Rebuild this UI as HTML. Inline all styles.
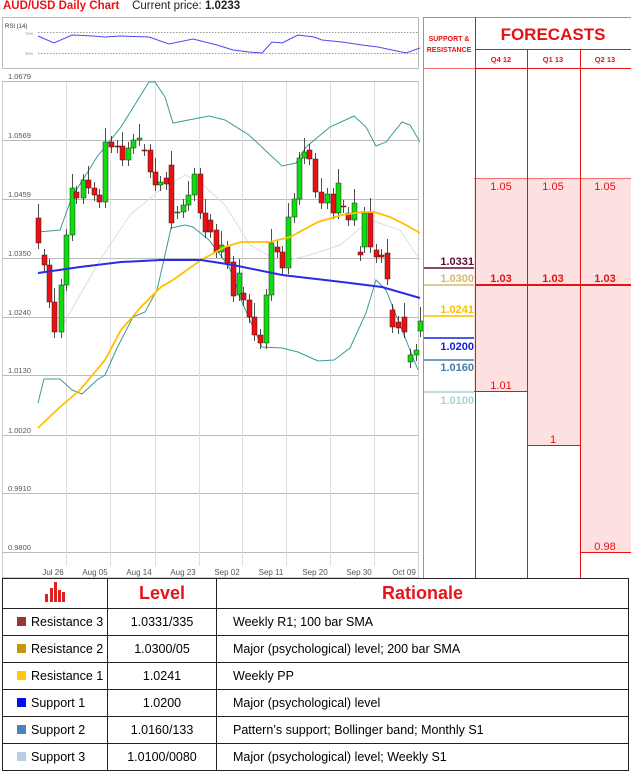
<!DOCTYPE html>
<html><head><meta charset="utf-8"><style>
body{margin:0;width:631px;height:773px;background:#fff;overflow:hidden;position:relative;font-family:"Liberation Sans",sans-serif}
.a{position:absolute}
table{border-collapse:collapse;position:absolute;left:2px;top:578px;width:627px;font-size:12.5px;table-layout:fixed;white-space:nowrap}
td{border:1px solid #222;height:26px;padding:0;overflow:hidden}
.q{display:inline-block;width:9px;height:9px;margin:0 5px 0 14px}
</style></head><body>
<div class="a" style="left:3px;top:0;font-size:11.5px;white-space:nowrap"><b style="color:#e8141a">AUD/USD Daily Chart</b>&nbsp;&nbsp;&nbsp;&nbsp;<span style="color:#222">Current price: <b>1.0233</b></span></div>
<svg class="a" style="left:0;top:0" width="631" height="578" id="s" xmlns="http://www.w3.org/2000/svg">
<rect x="2.5" y="17.5" width="416" height="51" fill="#fff" stroke="#bbb"/>
<text x="5" y="28" font-size="6" fill="#333" font-family="Liberation Sans">RSI (14)</text>
<text x="25" y="35" font-size="4" fill="#888">70%</text><text x="25" y="55" font-size="4" fill="#888">30%</text>
<line x1="38" y1="32.5" x2="418" y2="32.5" stroke="#999" stroke-dasharray="1.5,1.5"/>
<line x1="38" y1="53.5" x2="418" y2="53.5" stroke="#999" stroke-dasharray="1.5,1.5"/>
<polyline fill="none" stroke="#4a4aee" stroke-width="1" points="38,36 54,43 72,35 93,36 105,37 121,36 149,37 169,44 193,39 217,45 233,50 249,52 262,53 272,42 282,43 298,35 314,37 322,40 342,42 362,45 378,47 392,50 406,53 420,48"/>
<rect x="2.5" y="81.5" width="416" height="496" fill="none" stroke="#ccc"/>
<g id="grid"></g>
<g id="cd"></g>
<rect x="474" y="178" width="53" height="213" fill="#fde1e1"/>
<rect x="527" y="178" width="53" height="267" fill="#fde1e1"/>
<rect x="580" y="178" width="51" height="374" fill="#fde1e1"/>
<g stroke="#f07070" stroke-width="1">
<line x1="423.5" y1="17" x2="423.5" y2="578"/><line x1="423" y1="17.5" x2="631" y2="17.5"/>
<line x1="423" y1="68.5" x2="631" y2="68.5"/>
<line x1="474" y1="178.5" x2="631" y2="178.5"/>
</g>
<g stroke="#e81010" stroke-width="1">
<line x1="475.5" y1="17" x2="475.5" y2="578"/>
<line x1="475" y1="49.5" x2="631" y2="49.5"/>
<line x1="527.5" y1="49" x2="527.5" y2="578"/>
<line x1="580.5" y1="49" x2="580.5" y2="578"/>
<line x1="475" y1="68.5" x2="631" y2="68.5"/>
<line x1="474" y1="391.5" x2="527" y2="391.5"/>
<line x1="527" y1="445.5" x2="580" y2="445.5"/>
<line x1="580" y1="552.5" x2="631" y2="552.5"/>
</g>
<line x1="475" y1="285" x2="631" y2="285" stroke="#e81010" stroke-width="2"/>
<g font-family="Liberation Sans" text-anchor="middle" fill="#e81010">
<text x="449" y="41" font-size="7" font-weight="bold">SUPPORT &amp;</text>
<text x="449" y="52" font-size="7" font-weight="bold">RESISTANCE</text>
<text x="553" y="40" font-size="17" font-weight="bold">FORECASTS</text>
<text x="501" y="62" font-size="7.5" font-weight="bold">Q4 12</text>
<text x="553" y="62" font-size="7.5" font-weight="bold">Q1 13</text>
<text x="605" y="62" font-size="7.5" font-weight="bold">Q2 13</text>
<text x="501" y="190" font-size="11">1.05</text><text x="553" y="190" font-size="11">1.05</text><text x="605" y="190" font-size="11">1.05</text>
<text x="501" y="282" font-size="11" font-weight="bold">1.03</text><text x="553" y="282" font-size="11" font-weight="bold">1.03</text><text x="605" y="282" font-size="11" font-weight="bold">1.03</text>
<text x="501" y="389" font-size="11">1.01</text><text x="553" y="443" font-size="11">1</text><text x="605" y="550" font-size="11">0.98</text>
</g>
<g font-family="Liberation Sans" text-anchor="end" font-size="11" font-weight="bold">
<line x1="424" y1="268" x2="474" y2="268" stroke="#5a1030" stroke-width="1.5"/><text x="474" y="265" fill="#5a1030">1.0331</text>
<line x1="424" y1="285" x2="474" y2="285" stroke="#d8b870" stroke-width="1.5"/><text x="474" y="282" fill="#d8b870">1.0300</text>
<line x1="424" y1="316" x2="474" y2="316" stroke="#f8c000" stroke-width="1.5"/><text x="474" y="313" fill="#f8c000">1.0241</text>
<line x1="424" y1="338" x2="474" y2="338" stroke="#1020e0" stroke-width="1.5"/><text x="474" y="350" fill="#1020e0">1.0200</text>
<line x1="424" y1="360" x2="474" y2="360" stroke="#4a7aa8" stroke-width="1.5"/><text x="474" y="371" fill="#4a7aa8">1.0160</text>
<line x1="424" y1="392" x2="474" y2="392" stroke="#a8d4d4" stroke-width="1.5"/><text x="474" y="404" fill="#a8d4d4">1.0100</text>
</g>
</svg>
<table>
<colgroup><col style="width:105px"><col style="width:109px"><col></colgroup>
<tr><td style="height:29px;text-align:center"><svg width="26" height="22" viewBox="0 0 26 22"><g fill="#e02020"><rect x="3" y="13" width="3" height="8"/><rect x="8" y="7" width="3" height="14"/><rect x="12" y="1" width="3" height="20"/><rect x="16" y="9" width="3" height="12"/><rect x="20" y="11" width="3" height="10"/></g></svg></td>
<td style="text-align:center;color:#e8141a;font-weight:bold;font-size:18px">Level</td>
<td style="text-align:center;color:#e8141a;font-weight:bold;font-size:18px">Rationale</td></tr>
<tr><td><span class="q" style="background:#953735"></span>Resistance 3</td><td style="text-align:center">1.0331/335</td><td style="padding-left:16px">Weekly R1; 100 bar SMA</td></tr>
<tr><td><span class="q" style="background:#c8960c"></span>Resistance 2</td><td style="text-align:center">1.0300/05</td><td style="padding-left:16px">Major (psychological) level; 200 bar SMA</td></tr>
<tr><td><span class="q" style="background:#ffc800"></span>Resistance 1</td><td style="text-align:center">1.0241</td><td style="padding-left:16px">Weekly PP</td></tr>
<tr><td><span class="q" style="background:#0010f0"></span>Support 1</td><td style="text-align:center">1.0200</td><td style="padding-left:16px">Major (psychological) level</td></tr>
<tr><td><span class="q" style="background:#4f81bd"></span>Support 2</td><td style="text-align:center">1.0160/133</td><td style="padding-left:16px">Pattern’s support; Bollinger band; Monthly S1</td></tr>
<tr><td><span class="q" style="background:#b8cce4"></span>Support 3</td><td style="text-align:center">1.0100/0080</td><td style="padding-left:16px">Major (psychological) level; Weekly S1</td></tr>
</table>
<script>
var NS="http://www.w3.org/2000/svg",s=document.getElementById('s'),g=document.getElementById('grid'),cd=document.getElementById('cd');
function el(t,a,p){var e=document.createElementNS(NS,t);for(var k in a)e.setAttribute(k,a[k]);(p||cd).appendChild(e);return e;}
var lv=[["1.0679",81],["1.0569",140],["1.0459",199],["1.0350",258],["1.0240",317],["1.0130",375],["1.0020",435],["0.9910",493],["0.9800",552]];
lv.forEach(function(l){el('line',{x1:2,x2:418,y1:l[1]+.5,y2:l[1]+.5,stroke:'#bbb'},g);el('text',{x:8,y:l[1]-2,'font-size':7.5,fill:'#555',stroke:'none','font-family':'Liberation Sans'},g).textContent=l[0];});
[66,110,155,199,242,286,330,374].forEach(function(x){el('line',{x1:x+.5,x2:x+.5,y1:82,y2:566,stroke:'#ddd'},g);});
var dl=[["Jul 26",53],["Aug 05",95],["Aug 14",139],["Aug 23",183],["Sep 02",227],["Sep 11",271],["Sep 20",315],["Sep 30",359],["Oct 09",404]];
dl.forEach(function(d){el('text',{x:d[1],y:575,'font-size':8,fill:'#555',stroke:'none','text-anchor':'middle','font-family':'Liberation Sans'},g).textContent=d[0];});
function pl(p,c,w){el('polyline',{points:p,fill:'none',stroke:c,'stroke-width':w});}
pl("60,330 100,260 130,215 160,190 185,175 200,182 225,205 250,245 280,262 310,255 340,245 370,220 400,230 420,260","#ddd",1);
pl("38,232 60,230 72,197 97,157 121,127 149,82 155,82 165,97 173,123 209,116 225,120 249,135 282,166 296,163 306,147 330,127 354,116 366,127 376,146 386,142 402,122 410,125 420,142","#3a9a9a",1);
pl("38,403 44,379 60,379 72,390 82,394 97,380 105,375 117,348 133,317 145,312 157,290 165,255 171,228 185,225 193,227 209,240 219,253 229,267 237,287 241,300 262,347 282,348 298,352 318,361 334,360 350,348 366,313 376,280 386,290 402,330 418,370","#3a9a9a",1);
var C=[[38,218,243],[44,255,265],[49,265,302],[54,302,332],[61,332,285],[66,285,235],[72,235,188],[76,192,198],[83,198,180],[88,180,188],[94,188,195],[99,195,202],[105,202,142],[111,142,147],[117,146,147],[122,146,160],[128,160,148],[133,148,140],[139,140,138],[144,150,150],[150,150,172],[155,172,185],[160,185,182],[166,178,184],[171,165,223],[177,213,212],[183,212,205],[188,205,195],[194,195,174],[200,174,213],[205,213,232],[210,220,232],[216,230,252],[221,252,245],[227,247,263],[233,262,296],[239,295,273],[243,293,300],[249,300,317],[254,317,335],[260,335,343],[266,343,295],[271,295,243],[277,247,252],[282,252,268],[288,268,217],[294,217,199],[299,199,158],[304,158,152],[309,150,159],[315,159,192],[321,192,203],[327,203,194],[333,194,213],[338,213,183],[343,206,207],[348,213,220],[354,220,203],[360,252,255],[364,247,213],[370,212,247],[376,250,257],[381,255,257],[387,253,279],[392,310,327],[398,322,328],[404,317,332],[410,362,355],[416,355,350],[420,331,321]];
C.forEach(function(c,i){var t=Math.min(c[1],c[2]),b=Math.max(c[1],c[2]);var w=(i%3==0)?14:6;
el('line',{x1:c[0]+.5,x2:c[0]+.5,y1:t-w,y2:b+6,stroke:'#222','stroke-width':.8});
el('rect',{x:c[0]-2,y:t,width:5,height:Math.max(1,b-t),fill:c[2]<c[1]?'#10dd10':'#ee1010',stroke:'#222','stroke-width':.5});});
pl("38,428 60,407 80,390 105,360 121,330 141,307 161,287 173,280 201,260 225,247 241,242 270,242 290,237 318,222 342,215 362,212 374,212 390,217 406,225 420,233","#ffc000",1.8);
pl("38,273 80,267 121,262 161,260 201,260 233,265 282,275 342,282 382,287 420,298","#2a2ae8",2);
</script>
</body></html>
